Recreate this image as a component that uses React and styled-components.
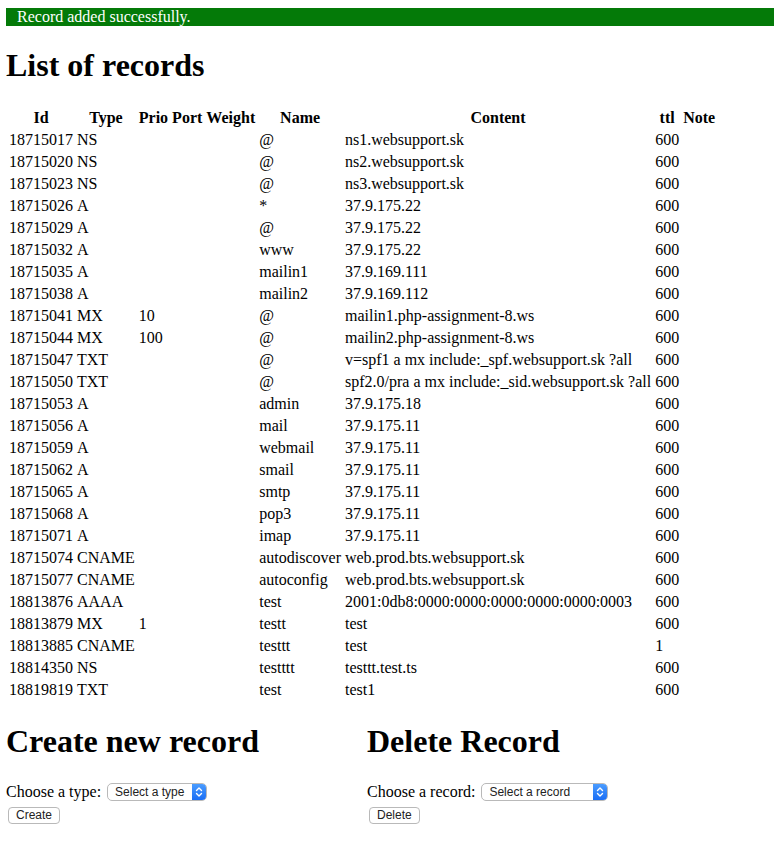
import React from "react";
import styled, { createGlobalStyle } from "styled-components";

const Global = createGlobalStyle`
  html, body { background: #fff; }
  body {
    margin: 8px 0 0 6px;
    font-family: "Liberation Serif", "Times New Roman", serif;
    font-size: 16px;
    color: #000;
  }
`;

const Flash = styled.div`
  background: #047a08;
  color: #fff;
  padding-left: 11px;
  line-height: 18px;
  height: 18px;
`;

const Heading = styled.h1`
  font-size: 32px;
  font-weight: bold;
  margin: 21px 0 ${(p) => p.$mb ?? 21}px 0;
  line-height: 37px;
`;

const Table = styled.table`
  border-spacing: 2px;
  margin-top: 0;
`;

const Th = styled.th`
  padding: 1px;
  font-weight: bold;
  text-align: center;
  line-height: 18px;
`;

const Td = styled.td`
  padding: 1px;
  line-height: 18px;
  white-space: nowrap;
`;

const Bottom = styled.div`
  display: flex;
`;

const Column = styled.div`
  width: ${(p) => p.$w}px;
  flex: none;
`;

const FormRow = styled.div`
  display: flex;
  align-items: center;
  height: 22px;
  margin-top: 2px;
`;

const Label = styled.span`
  margin-right: 6px;
`;

const SelectBox = styled.div`
  display: inline-flex;
  align-items: stretch;
  height: 18px;
  width: ${(p) => p.$w}px;
  border: 1px solid #b9b9b9;
  border-radius: 5px;
  box-sizing: border-box;
  overflow: hidden;
  background: #fff;
  font-family: "Liberation Sans", Arial, sans-serif;
  font-size: 12px;
  color: #222;
`;

const SelectText = styled.span`
  flex: 1;
  padding-left: 7px;
  line-height: 16px;
`;

const Stepper = styled.span`
  width: 14px;
  background: linear-gradient(#4a9cff, #1a6ef5);
  display: flex;
  align-items: center;
  justify-content: center;
`;

const ButtonRow = styled.div`
  margin-top: 2px;
  padding-left: 2px;
`;

const Button = styled.button`
  font-family: "Liberation Sans", Arial, sans-serif;
  font-size: 12px;
  color: #222;
  background: #fff;
  border: 1px solid #b9b9b9;
  border-radius: 4px;
  height: 17px;
  padding: 0 7px;
  line-height: 15px;
`;

const records = [
  ["18715017", "NS", "", "@", "ns1.websupport.sk", "600"],
  ["18715020", "NS", "", "@", "ns2.websupport.sk", "600"],
  ["18715023", "NS", "", "@", "ns3.websupport.sk", "600"],
  ["18715026", "A", "", "*", "37.9.175.22", "600"],
  ["18715029", "A", "", "@", "37.9.175.22", "600"],
  ["18715032", "A", "", "www", "37.9.175.22", "600"],
  ["18715035", "A", "", "mailin1", "37.9.169.111", "600"],
  ["18715038", "A", "", "mailin2", "37.9.169.112", "600"],
  ["18715041", "MX", "10", "@", "mailin1.php-assignment-8.ws", "600"],
  ["18715044", "MX", "100", "@", "mailin2.php-assignment-8.ws", "600"],
  ["18715047", "TXT", "", "@", "v=spf1 a mx include:_spf.websupport.sk ?all", "600"],
  ["18715050", "TXT", "", "@", "spf2.0/pra a mx include:_sid.websupport.sk ?all", "600"],
  ["18715053", "A", "", "admin", "37.9.175.18", "600"],
  ["18715056", "A", "", "mail", "37.9.175.11", "600"],
  ["18715059", "A", "", "webmail", "37.9.175.11", "600"],
  ["18715062", "A", "", "smail", "37.9.175.11", "600"],
  ["18715065", "A", "", "smtp", "37.9.175.11", "600"],
  ["18715068", "A", "", "pop3", "37.9.175.11", "600"],
  ["18715071", "A", "", "imap", "37.9.175.11", "600"],
  ["18715074", "CNAME", "", "autodiscover", "web.prod.bts.websupport.sk", "600"],
  ["18715077", "CNAME", "", "autoconfig", "web.prod.bts.websupport.sk", "600"],
  ["18813876", "AAAA", "", "test", "2001:0db8:0000:0000:0000:0000:0000:0003", "600"],
  ["18813879", "MX", "1", "testt", "test", "600"],
  ["18813885", "CNAME", "", "testtt", "test", "1"],
  ["18814350", "NS", "", "testttt", "testtt.test.ts", "600"],
  ["18819819", "TXT", "", "test", "test1", "600"],
];

const Chevrons = () => (
  <svg width="8" height="12" viewBox="0 0 8 12" fill="none" stroke="#fff" strokeWidth="1.4" strokeLinecap="round" strokeLinejoin="round">
    <path d="M1.5 4.5 L4 2 L6.5 4.5" />
    <path d="M1.5 7.5 L4 10 L6.5 7.5" />
  </svg>
);

const Select = ({ w, text }) => (
  <SelectBox $w={w}>
    <SelectText>{text}</SelectText>
    <Stepper>
      <Chevrons />
    </Stepper>
  </SelectBox>
);

export default function App() {
  return (
    <>
      <Global />
      <Flash>Record added successfully.</Flash>
      <Heading $mb={22}>List of records</Heading>
      <Table>
        <thead>
          <tr>
            <Th>Id</Th>
            <Th>Type</Th>
            <Th>Prio</Th>
            <Th>Port</Th>
            <Th>Weight</Th>
            <Th>Name</Th>
            <Th>Content</Th>
            <Th>ttl</Th>
            <Th>Note</Th>
          </tr>
        </thead>
        <tbody>
          {records.map((r) => (
            <tr key={r[0]}>
              <Td>{r[0]}</Td>
              <Td>{r[1]}</Td>
              <Td>{r[2]}</Td>
              <Td></Td>
              <Td></Td>
              <Td>{r[3]}</Td>
              <Td>{r[4]}</Td>
              <Td>{r[5]}</Td>
              <Td></Td>
            </tr>
          ))}
        </tbody>
      </Table>
      <Bottom>
        <Column $w={361}>
          <Heading>Create new record</Heading>
          <FormRow>
            <Label>Choose a type:</Label>
            <Select w={100} text="Select a type" />
          </FormRow>
          <ButtonRow>
            <Button>Create</Button>
          </ButtonRow>
        </Column>
        <Column $w={400}>
          <Heading>Delete Record</Heading>
          <FormRow>
            <Label>Choose a record:</Label>
            <Select w={127} text="Select a record" />
          </FormRow>
          <ButtonRow>
            <Button>Delete</Button>
          </ButtonRow>
        </Column>
      </Bottom>
    </>
  );
}
